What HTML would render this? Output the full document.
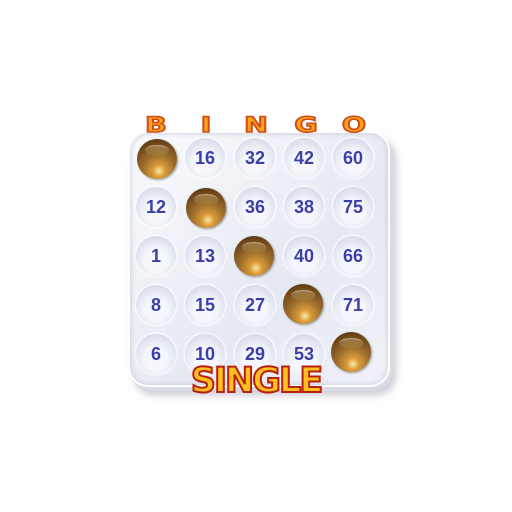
<!DOCTYPE html><html><head><style>
body{margin:0;width:512px;height:512px;background:#fff;position:relative;overflow:hidden;font-family:"Liberation Sans",sans-serif}
.board{position:absolute;left:128px;top:131px;width:258px;height:252px;border-radius:20px;background:linear-gradient(135deg,#fafbfe,#e6e8f1 60%,#f1f2f8);border:2px solid #fff;box-shadow:3px 4px 0 #d8dae5,6px 8px 8px rgba(120,120,140,.4),inset 0 0 6px #c2c6d6}
.c{position:absolute;width:40px;height:40px;margin:-20px 0 0 -20px;border-radius:50%;background:radial-gradient(circle at 50% 62%,#f6f7fc 35%,#d9dcec 75%,#c1c6dc);box-shadow:0 0 2px 1px #fff;color:#3b3fa8;font-weight:bold;font-size:18px;line-height:41px;text-align:center}
.b{position:absolute;width:40px;height:40px;margin:-20px 0 0 -20px;border-radius:50%;background:radial-gradient(circle at 55% 80%,#ffe7a0 0,#d99a38 16%,#9c6e2c 42%,#6e4818 72%,#3e280b);box-shadow:1px 1px 2px rgba(0,0,0,.4)}
.b:after{content:"";position:absolute;left:8px;top:6px;width:24px;height:10px;border-radius:50%;background:linear-gradient(rgba(255,240,210,.25),rgba(255,240,210,.05));border-top:1px solid rgba(255,240,210,.5)}
.L{position:absolute;top:113px;width:24px;margin-left:-12px;text-align:center;font-weight:900;font-size:21px;color:#ffa51a;-webkit-text-stroke:1.5px #d04a18;font-family:"DejaVu Sans",sans-serif;transform:scaleX(1.35)}
.s{position:absolute;left:184px;top:361px;width:144px;text-align:center;font-family:"DejaVu Sans",sans-serif;font-weight:900;font-size:35px;letter-spacing:-2px;color:#ffc01c;-webkit-text-stroke:2px #b82012;text-shadow:0 1px 0 #a01a0c}
</style></head><body>
<div class="board"></div>
<div class="L" style="left:156px">B</div><div class="L" style="left:206px">I</div><div class="L" style="left:256px">N</div><div class="L" style="left:306px">G</div><div class="L" style="left:354px">O</div>
<div class="b" style="left:157px;top:159px"></div>
<div class="c" style="left:205px;top:158px">16</div><div class="c" style="left:255px;top:158px">32</div><div class="c" style="left:304px;top:158px">42</div><div class="c" style="left:353px;top:158px">60</div>
<div class="c" style="left:156px;top:207px">12</div><div class="b" style="left:206px;top:208px"></div><div class="c" style="left:255px;top:207px">36</div><div class="c" style="left:304px;top:207px">38</div><div class="c" style="left:353px;top:207px">75</div>
<div class="c" style="left:156px;top:256px">1</div><div class="c" style="left:205px;top:256px">13</div><div class="b" style="left:254px;top:256px"></div><div class="c" style="left:304px;top:256px">40</div><div class="c" style="left:353px;top:256px">66</div>
<div class="c" style="left:156px;top:305px">8</div><div class="c" style="left:205px;top:305px">15</div><div class="c" style="left:255px;top:305px">27</div><div class="b" style="left:303px;top:304px"></div><div class="c" style="left:353px;top:305px">71</div>
<div class="c" style="left:156px;top:354px">6</div><div class="c" style="left:205px;top:354px">10</div><div class="c" style="left:255px;top:354px">29</div><div class="c" style="left:304px;top:354px">53</div><div class="b" style="left:351px;top:352px"></div>
<div class="s">SINGLE</div>
</body></html>
